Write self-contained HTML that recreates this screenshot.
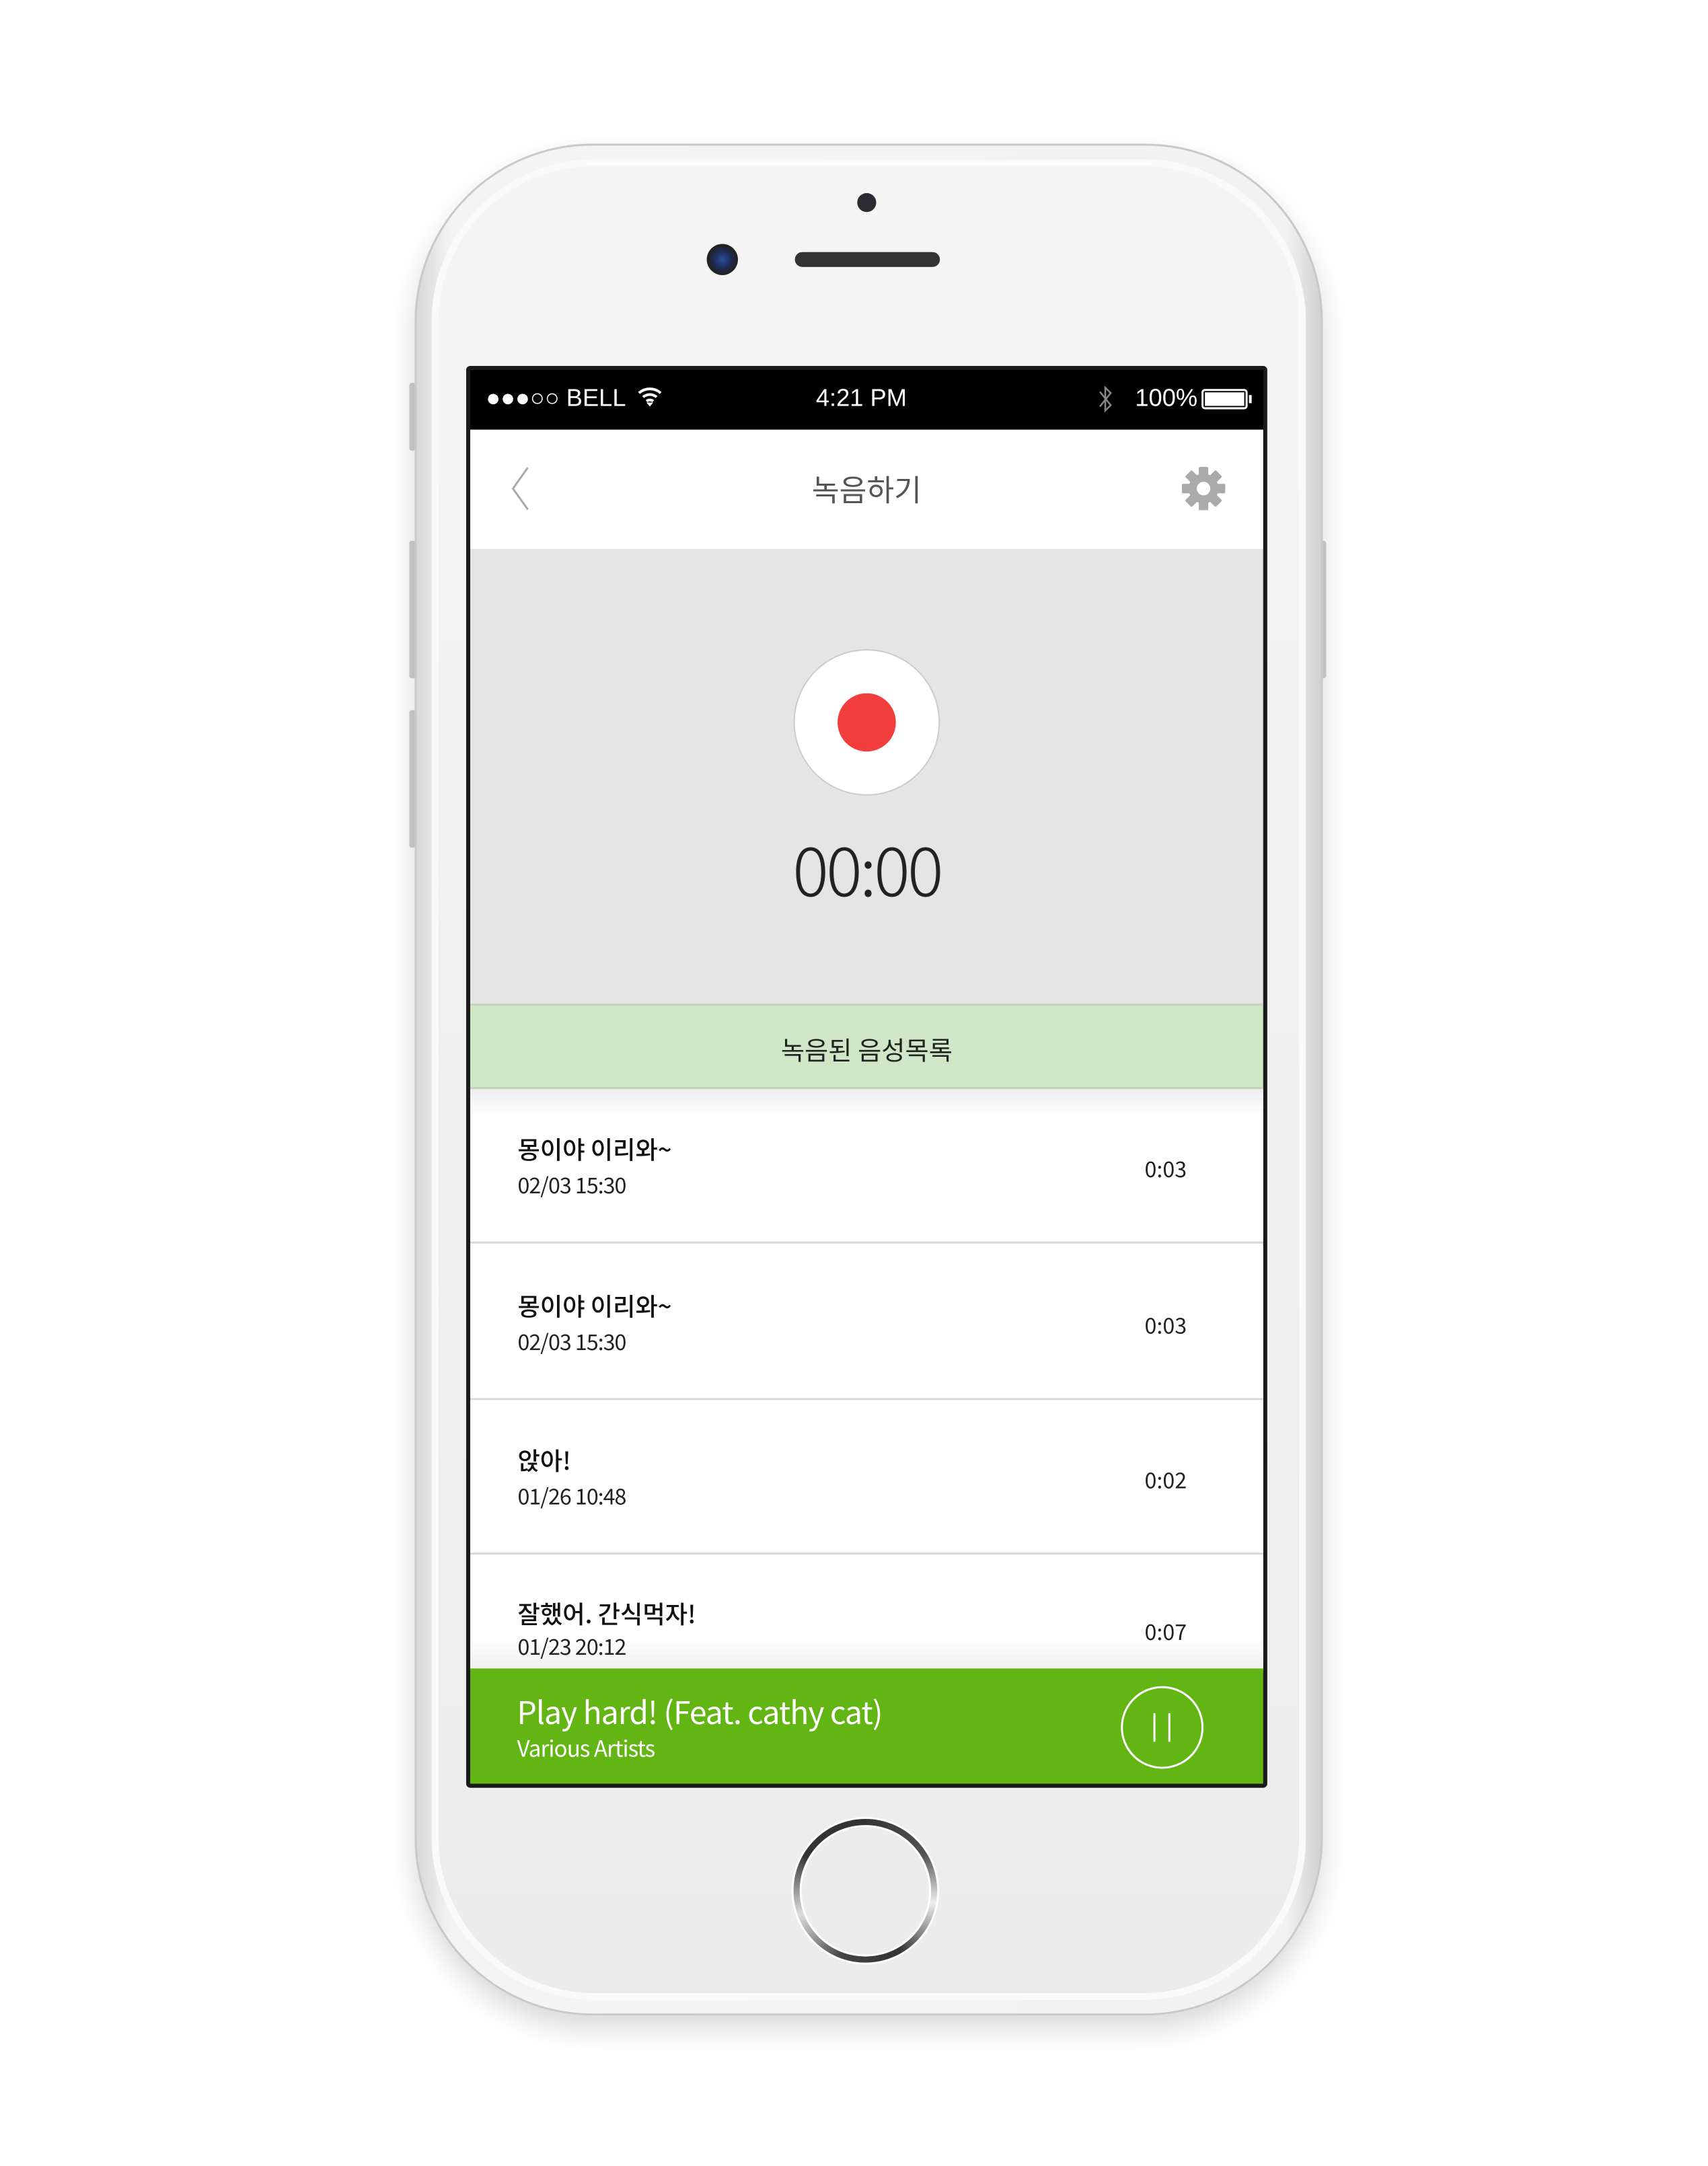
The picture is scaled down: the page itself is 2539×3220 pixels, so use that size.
<!DOCTYPE html>
<html><head><meta charset="utf-8"><style>
*{margin:0;padding:0;box-sizing:border-box}
body{width:2539px;height:3200px;background:#fff;position:relative;overflow:hidden;font-family:"Liberation Sans","Noto Sans CJK KR",sans-serif}
#w{position:absolute;left:0;top:0;width:2539px;height:3200px;transform:scale(1.0075);transform-origin:697px 549px}
.a{position:absolute}
.phone{left:617px;top:216px;width:1340px;height:2762px;border-radius:262px;background:linear-gradient(90deg,#d6d6d6,#f4f4f4 4%,#f2f2f2 96%,#d0d0d0);box-shadow:0 20px 40px rgba(0,0,0,.15),inset 0 0 0 3px #c9c9c9}
.face{left:642px;top:239px;width:1290px;height:2716px;border-radius:240px;background:linear-gradient(#f5f5f5,#ececec);box-shadow:inset 0 0 0 10px #fafafa}
.btn{background:#cfcfcf;width:10px;border-radius:4px}
.screen{left:693px;top:544px;width:1182px;height:2098px;background:#1a1a1a;border-radius:6px}
.t{white-space:nowrap}
.n{font-family:"Noto Sans CJK KR","Liberation Sans",sans-serif}
.row{left:699px;width:1170px;height:228px;background:#fff;border-bottom:3px solid #d8d8d8}
.ti{left:70px;font-size:36px;color:#111;font-weight:500;font-family:"Noto Sans CJK KR",sans-serif;top:62px!important}
.dt{left:70px;font-size:32px;color:#222;font-family:"Noto Sans CJK KR",sans-serif;top:118px!important;letter-spacing:-1px}
.du{left:995px;font-size:32px;color:#222;font-family:"Noto Sans CJK KR",sans-serif;top:94px!important}
</style></head><body><div id="w">
<div class="a btn" style="left:609px;top:569px;height:100px"></div>
<div class="a btn" style="left:609px;top:802px;height:203px"></div>
<div class="a btn" style="left:609px;top:1052px;height:203px"></div>
<div class="a btn" style="left:1952px;top:802px;height:203px"></div>
<div class="a phone"></div>
<div class="a face"></div>
<div class="a" style="left:1270px;top:289px;width:28px;height:28px;border-radius:50%;background:#2a2a30"></div>
<div class="a" style="left:1048px;top:364px;width:46px;height:46px;border-radius:50%;background:radial-gradient(circle,#2b4fa0 0,#1d2a55 40%,#222 65%)"></div>
<div class="a" style="left:1178px;top:376px;width:214px;height:22px;border-radius:11px;background:#333"></div>
<div class="a screen"></div>
<div class="a" style="left:699px;top:1611px;width:1170px;height:860px;background:#fff"></div>
<div class="a" style="left:699px;top:550px;width:1170px;height:88px;background:#000"></div>
<!-- status bar -->
<div class="a t" style="left:722px;top:570px;color:#fff;font-size:36px">●●●○○ BELL</div>
<svg class="a" style="left:944px;top:572px" width="40" height="34" viewBox="0 0 40 34"><path d="M4 12 A24 24 0 0 1 36 12 M10 18 A15 15 0 0 1 30 18 M15 24 A8 8 0 0 1 25 24" stroke="#fff" stroke-width="4" fill="none"/><path d="M20 32 L15 26 L25 26Z" fill="#fff"/></svg>
<div class="a t" style="left:1209px;top:570px;color:#fff;font-size:36px">4:21 PM</div>
<svg class="a" style="left:1622px;top:570px" width="28" height="46" viewBox="0 0 28 46"><path d="M6 12 L22 32 L14 40 L14 6 L22 14 L6 34" stroke="#888" stroke-width="2.5" fill="none"/></svg>
<div class="a t" style="left:1680px;top:570px;color:#fff;font-size:36px">100%</div>
<div class="a" style="left:1778px;top:578px;width:68px;height:30px;border:3px solid #fff;border-radius:5px;padding:2px"><div style="background:#fff;width:100%;height:100%"></div></div>
<div class="a" style="left:1848px;top:587px;width:4px;height:12px;background:#fff"></div>
<!-- nav -->
<div class="a" style="left:699px;top:638px;width:1170px;height:176px;background:#fff"></div>
<svg class="a" style="left:758px;top:690px" width="30" height="70" viewBox="0 0 30 70"><path d="M26 4 L4 35 L26 66" stroke="#aaa" stroke-width="3" fill="none"/></svg>
<div class="a t n" style="left:1184px;top:692px;width:200px;text-align:center;font-size:44px;color:#555">녹음하기</div>
<svg class="a" style="left:1748px;top:692px" width="66" height="66" viewBox="-33 -33 66 66"><g fill="#aaa"><circle r="22"/><g id="g"><rect x="-7" y="-32" width="14" height="14" rx="2"/></g><use href="#g" transform="rotate(45)"/><use href="#g" transform="rotate(90)"/><use href="#g" transform="rotate(135)"/><use href="#g" transform="rotate(180)"/><use href="#g" transform="rotate(225)"/><use href="#g" transform="rotate(270)"/><use href="#g" transform="rotate(315)"/></g><circle r="10" fill="#fff"/></svg>
<!-- record area -->
<div class="a" style="left:699px;top:814px;width:1170px;height:671px;background:#e5e5e5"></div>
<div class="a" style="left:1176px;top:962px;width:216px;height:216px;border-radius:50%;background:#fff;border:2px solid #ccc"></div>
<div class="a" style="left:1241px;top:1027px;width:86px;height:86px;border-radius:50%;background:#f23d3d"></div>
<div class="a t n" style="left:1084px;top:1210px;width:400px;text-align:center;font-size:100px;font-weight:300;color:#222;letter-spacing:-4px">00:00</div>
<!-- list header -->
<div class="a" style="left:699px;top:1485px;width:1170px;height:126px;background:#cfe6c7;border-top:3px solid #c2d8ba;border-bottom:3px solid #bfd6b7"></div>
<div class="a t n" style="left:1084px;top:1524px;width:400px;text-align:center;font-size:38px;color:#222">녹음된 음성목록</div>
<!-- rows -->
<div class="a row" style="top:1611px;background:linear-gradient(#eee,#fff 40px)"><div class="a t ti">몽이야 이리와~</div><div class="a t dt">02/03 15:30</div><div class="a t du">0:03</div></div>
<div class="a row" style="top:1842px"><div class="a t ti">몽이야 이리와~</div><div class="a t dt">02/03 15:30</div><div class="a t du">0:03</div></div>
<div class="a row" style="top:2070px"><div class="a t ti">앉아!</div><div class="a t dt">01/26 10:48</div><div class="a t du">0:02</div></div>
<div class="a row" style="top:2300px;height:166px;border:none;background:linear-gradient(#fff 120px,#f0f0f0)"><div class="a t ti" style="top:58px!important">잘했어. 간식먹자!</div><div class="a t dt" style="top:110px!important">01/23 20:12</div><div class="a t du" style="top:88px!important">0:07</div></div>
<!-- player -->
<div class="a" style="left:699px;top:2466px;width:1170px;height:170px;background:#63b513"></div>
<div class="a t n" style="left:768px;top:2496px;font-size:46px;color:#fff;letter-spacing:-1px">Play hard! (Feat. cathy cat)</div>
<div class="a t n" style="left:768px;top:2558px;font-size:33px;color:#fff;letter-spacing:-1px">Various Artists</div>
<div class="a" style="left:1659px;top:2492px;width:122px;height:122px;border-radius:50%;border:3px solid #fff"></div>
<div class="a" style="left:1707px;top:2532px;width:3px;height:42px;background:#fff"></div>
<div class="a" style="left:1729px;top:2532px;width:3px;height:42px;background:#fff"></div>
<!-- home -->
<div class="a" style="left:1176px;top:2688px;width:212px;height:212px;border-radius:50%;background:conic-gradient(#333,#555 60deg,#eee 100deg,#333 150deg,#444 200deg,#ddd 250deg,#333 300deg,#333);box-shadow:0 0 0 3px #fff"></div>
<div class="a" style="left:1188px;top:2700px;width:188px;height:188px;border-radius:50%;background:#ececec;box-shadow:0 0 0 3px #fff"></div>
</div></body></html>
